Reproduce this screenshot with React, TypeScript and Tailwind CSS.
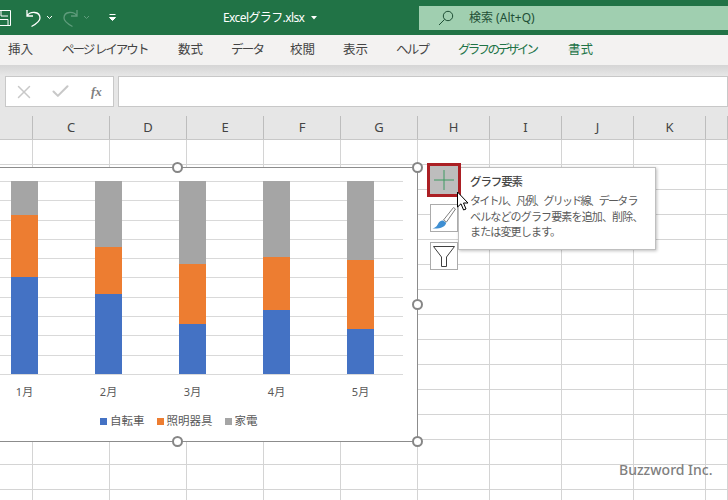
import React from 'react';
import { Check, X } from 'lucide-react';

const JP = "font-['Noto_Sans','Noto_Sans_CJK_JP',sans-serif]";

const columns = [
  { name: '', width: 'w-[33px]' },
  { name: 'C', width: 'w-[77px]' },
  { name: 'D', width: 'w-[77px]' },
  { name: 'E', width: 'w-[77px]' },
  { name: 'F', width: 'w-[77px]' },
  { name: 'G', width: 'w-[77px]' },
  { name: 'H', width: 'w-[72px]' },
  { name: 'I', width: 'w-[72px]' },
  { name: 'J', width: 'w-[72px]' },
  { name: 'K', width: 'w-[72px]' },
  { name: '', width: 'flex-1' },
];

const tabs = [
  { label: '挿入', className: 'w-[62px] pl-2' },
  { label: 'ページ レイアウト', className: 'w-[116px] tracking-[-1.95px]' },
  { label: '数式', className: 'w-[53px]' },
  { label: 'データ', className: 'w-[59px] tracking-[-1.7px]' },
  { label: '校閲', className: 'w-[53px]' },
  { label: '表示', className: 'w-[53px]' },
  { label: 'ヘルプ', className: 'w-[62px] tracking-[-1.7px]' },
  { label: 'グラフのデザイン', className: 'w-[110px] text-[#217346] tracking-[-2.7px]' },
  { label: '書式', className: 'text-[#217346]' },
];

// pixel heights of each stacked segment
const bars = [
  { month: '1月', gray: 34, orange: 62, blue: 97 },
  { month: '2月', gray: 66, orange: 47, blue: 80 },
  { month: '3月', gray: 83, orange: 60, blue: 50 },
  { month: '4月', gray: 76, orange: 53, blue: 64 },
  { month: '5月', gray: 79, orange: 69, blue: 45 },
];

const legend = [
  { label: '自転車', color: 'bg-[#4472c4]' },
  { label: '照明器具', color: 'bg-[#ed7d31]' },
  { label: '家電', color: 'bg-[#a5a5a5]' },
];

const Handle = ({ className }: { className: string }) => (
  <div className={`absolute h-[11px] w-[11px] rounded-full border-2 border-[#868686] bg-white ${className}`} />
);

const Chart = () => (
  <div className="absolute left-[-10px] top-[167px] flex h-[275px] w-[428px] flex-col border border-[#8c8c8c] bg-white">
    <div className="relative mt-[13px] h-[194px] w-[412px]">
      <div className="absolute inset-0 flex flex-col justify-between">
        {Array.from({ length: 11 }).map((_, i) => (
          <div key={i} className="h-px bg-[#d9d9d9]" />
        ))}
      </div>
      <div className="relative flex h-full gap-[57px] pl-5">
        {bars.map((b) => (
          <div key={b.month} className="flex w-[27px] flex-col">
            <div className="bg-[#a5a5a5]" style={{ height: b.gray }} />
            <div className="bg-[#ed7d31]" style={{ height: b.orange }} />
            <div className="bg-[#4472c4]" style={{ height: b.blue }} />
          </div>
        ))}
      </div>
    </div>
    <div className={`mt-[9px] flex gap-[57px] pl-5 text-[11px] leading-4 text-[#595959] ${JP}`}>
      {bars.map((b) => (
        <div key={b.month} className="w-[27px] text-center">
          {b.month}
        </div>
      ))}
    </div>
    <div className={`mt-[13px] flex pl-[109px] text-[11.5px] leading-4 text-[#595959] ${JP}`}>
      {legend.map((l) => (
        <div key={l.label} className="mr-[12px] flex items-center gap-[3px]">
          <span className={`h-[7px] w-[7px] ${l.color}`} />
          {l.label}
        </div>
      ))}
    </div>
  </div>
);

const ChartButtons = () => (
  <div className="absolute left-[427px] top-[163px] flex w-[34px] flex-col items-center gap-[10px]">
    <div className="flex h-[34px] w-[34px] items-center justify-center border-[3px] border-[#ab1f24] bg-[#bdbdbd]">
      <svg width="22" height="22" viewBox="0 0 22 22">
        <path d="M11 1v20M1 11h20" stroke="#3f9a62" strokeWidth="1" fill="none" />
      </svg>
    </div>
    <div className="-mt-[3px] flex h-[28px] w-[28px] items-center justify-center border border-[#ababab] bg-white">
      <svg width="26" height="26" viewBox="0 0 26 26">
        <path d="M22.5 2.5 L24.5 4 L15.5 17 L12.5 15 Z" fill="#fff" stroke="#7f7f7f" strokeWidth="1" />
        <path d="M12 15.5 L15.2 17.7 C14.5 21.5 9.5 24 1.5 23.5 C5.5 22.5 6.5 20 7.5 18 C8.5 16.2 10.5 15.2 12 15.5 Z" fill="#3f8fd2" />
      </svg>
    </div>
    <div className="flex h-[28px] w-[28px] items-center justify-center border border-[#ababab] bg-white">
      <svg width="24" height="24" viewBox="0 0 24 24">
        <path d="M1.5 2.5 H22.5 L14.5 13 V22.5 H9.5 V13 Z" fill="#fff" stroke="#404040" strokeWidth="1" />
      </svg>
    </div>
  </div>
);

const Tooltip = () => (
  <div className={`absolute left-[458px] top-[167px] h-[83px] w-[198px] border border-[#bfbfbf] bg-white pl-[11px] pt-[5px] shadow-[1px_1px_3px_rgba(0,0,0,0.25)] ${JP}`}>
    <div className="text-[11.5px] font-medium leading-[17px] tracking-[-1.1px] text-[#444444]">グラフ要素</div>
    <div className="mt-[3px] w-[182px] text-[11px] leading-[15.5px] text-[#5a5a5a]">
      <div className="whitespace-nowrap tracking-[-1.8px]">タイトル、凡例、グリッド線、データ ラ</div>
      <div className="whitespace-nowrap tracking-[-0.85px]">ベルなどのグラフ要素を追加、削除、</div>
      <div className="whitespace-nowrap tracking-[-0.85px]">または変更します。</div>
    </div>
  </div>
);

const Cursor = () => (
  <svg className="absolute left-[456px] top-[191px]" width="14" height="21" viewBox="0 0 14 21">
    <path d="M1.5 1 V16 L5 12.8 L7.6 19 L10 18 L7.5 12 H12 Z" fill="#fff" stroke="#000" strokeWidth="1" />
  </svg>
);

export default function App() {
  return (
    <div className={`relative flex h-[500px] w-[728px] flex-col overflow-hidden bg-white ${JP}`}>
      {/* title bar */}
      <div className="flex h-[35px] shrink-0 items-center bg-[#217346] text-white">
        <div className="flex w-[223px] items-center">
          <svg className="ml-[-6px]" width="18" height="18" viewBox="0 0 18 18">
            <path d="M1 1.5 H16.5 V16.5 H1 M7 1.5 V7 H14 M4 16.5 V10.5 H14 V16.5" fill="none" stroke="#fff" strokeWidth="1" />
          </svg>
          <svg className="ml-[13px]" width="17" height="20" viewBox="0 0 17 20">
            <path d="M2 2 V8 H8 M2 8 C5 3 15 3 15 10 C15 13 12 15.5 6.5 18.5" fill="none" stroke="#fff" strokeWidth="1.3" />
          </svg>
          <svg className="ml-[4px]" width="7" height="5" viewBox="0 0 7 5">
            <path d="M1 1 L3.5 3.5 L6 1" fill="none" stroke="#fff" strokeWidth="1" />
          </svg>
          <svg className="ml-[9px]" width="17" height="20" viewBox="0 0 17 20">
            <path d="M15 2 V8 H9 M15 8 C12 3 2 3 2 10 C2 13 5 15.5 10.5 18.5" fill="none" stroke="#5f9c7c" strokeWidth="1.3" />
          </svg>
          <svg className="ml-[4px]" width="7" height="5" viewBox="0 0 7 5">
            <path d="M1 1 L3.5 3.5 L6 1" fill="none" stroke="#5f9c7c" strokeWidth="1" />
          </svg>
          <svg className="ml-[18px]" width="9" height="9" viewBox="0 0 9 9">
            <path d="M1.5 1.5 H7.5 M1.5 4.5 H7.5 L4.5 7.5 Z" fill="#fff" stroke="#fff" strokeWidth="1" />
          </svg>
        </div>
        <div className="flex w-[196px] items-center text-[12px] tracking-[-0.6px]">
          Excelグラフ.xlsx
          <svg className="ml-[7px]" width="6" height="4" viewBox="0 0 6 4">
            <path d="M0 0 H6 L3 3.5 Z" fill="#fff" />
          </svg>
        </div>
        <div className="flex h-[24px] flex-1 items-center bg-[#a0cfb0] pl-[19px] text-[12px] text-[#1f4f36]">
          <svg width="16" height="16" viewBox="0 0 16 16">
            <circle cx="10" cy="6" r="4.7" fill="none" stroke="#1f4f36" strokeWidth="1" />
            <path d="M6.6 9.4 L1 15" fill="none" stroke="#1f4f36" strokeWidth="1" />
          </svg>
          <span className="ml-[15px]">検索 (Alt+Q)</span>
        </div>
      </div>

      {/* ribbon tabs */}
      <div className="flex h-[30px] shrink-0 items-center bg-[#f3f2f1] text-[12.5px] text-[#444444]">
        {tabs.map((t) => (
          <div key={t.label} className={`whitespace-nowrap ${t.className}`}>
            {t.label}
          </div>
        ))}
      </div>

      {/* formula bar */}
      <div className="flex h-[42px] shrink-0 gap-[4px] bg-gradient-to-b from-[#d5d5d5] from-0% to-[#e6e6e6] to-[25%] pl-[5px] pt-[11px]">
        <div className="flex h-[31px] w-[109px] items-center border border-[#c8c8c8] bg-white pl-[7px]">
          <X size={22} strokeWidth={1.6} className="text-[#c8c8c8]" />
          <Check size={21} strokeWidth={2.4} className="ml-[15px] text-[#c8c8c8]" />
          <span className="ml-[20px] font-['Liberation_Serif',serif] text-[13px] font-bold italic text-[#808080]">fx</span>
        </div>
        <div className="h-[31px] flex-1 border border-[#c8c8c8] bg-white" />
      </div>

      {/* column headers */}
      <div className="flex h-[33px] shrink-0 items-end border-b border-[#c8c8c8] bg-[#e6e6e6]">
        {columns.map((c, i) => (
          <div
            key={i}
            className={`flex h-[23px] items-center justify-center border-r border-[#bdbdbd] text-[13px] text-[#444444] ${c.width}`}
          >
            {c.name}
          </div>
        ))}
      </div>

      {/* cells */}
      <div className="flex shrink-0 flex-col">
        {Array.from({ length: 15 }).map((_, row) => (
          <div key={row} className="flex h-[25px]">
            {columns.map((c, i) => (
              <div key={i} className={`border-r border-b border-[#d4d4d4] ${c.width}`} />
            ))}
          </div>
        ))}
      </div>

      <Chart />
      <Handle className="left-[172px] top-[162px]" />
      <Handle className="left-[412px] top-[162px]" />
      <Handle className="left-[412px] top-[299px]" />
      <Handle className="left-[412px] top-[436px]" />
      <Handle className="left-[172px] top-[436px]" />
      <Tooltip />
      <ChartButtons />
      <Cursor />
      <div className="absolute left-[619px] top-[460px] text-[14px] font-medium leading-5 text-[#808080]">Buzzword Inc.</div>
    </div>
  );
}
